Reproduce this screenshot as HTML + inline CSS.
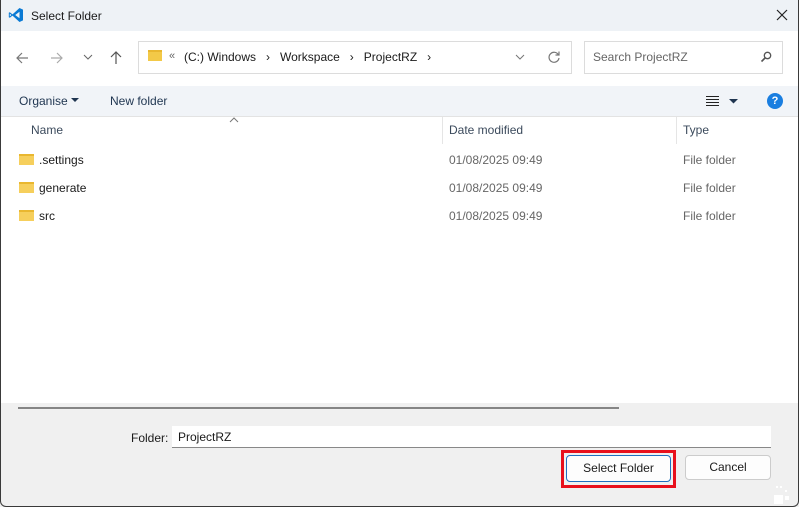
<!DOCTYPE html>
<html><head><style>
*{margin:0;padding:0;box-sizing:border-box}
body{width:799px;height:507px;overflow:hidden;font-family:"Liberation Sans",sans-serif;font-size:12px;color:#1a1a1a;background:#fff;position:relative}
.win{position:absolute;left:0;top:0;width:799px;height:507px;overflow:hidden}
.frame{position:absolute;left:0;top:0;width:799px;height:507px;border:1px solid #3a3a3a;border-top:none;border-radius:0 0 6px 6px;pointer-events:none}
.abs{position:absolute}
.title{left:0;top:0;width:799px;height:31px;background:#eef2f6}
.nav{left:0;top:31px;width:799px;height:55px;background:#fff}
.tool{left:0;top:86px;width:799px;height:30px;background:#f1f4f8}
.hdr{top:116px;height:27px;left:0;width:799px;background:#fff;border-top:1px solid #e3e3e3}
.bot{left:0;top:403px;width:799px;height:104px;background:#f0f0f0}
.row{position:absolute;left:0;width:799px;height:28px}
.row span{position:absolute;top:7px}
</style></head><body><div class="win">
<div class="abs title">
<svg class="abs" style="left:8px;top:7px" width="16" height="16" viewBox="0 0 16 16"><path d="M11.5 1 L15 2.6 V13.4 L11.5 15 L4.5 8.6 L1.8 10.7 L0.8 10.2 V5.8 L1.8 5.3 L4.5 7.4 Z M11.5 4.8 L7.2 8 L11.5 11.2 Z M1.8 6.6 V9.4 L3.4 8 Z" fill="#0a7ad4"/></svg>
<div class="abs" style="left:31px;top:9px;font-size:12px">Select Folder</div>
<svg class="abs" style="left:776px;top:9px" width="12" height="12"><path d="M1 1L11 11M11 1L1 11" stroke="#222" stroke-width="1.2"/></svg>
</div>
<div class="abs nav">
<svg class="abs" style="left:15px;top:20px" width="14" height="14"><path d="M13 7H2M7 2L2 7L7 12" stroke="#777" fill="none" stroke-width="1.2"/></svg>
<svg class="abs" style="left:50px;top:20px" width="14" height="14"><path d="M1 7H12M7 2L12 7L7 12" stroke="#aaa" fill="none" stroke-width="1.2"/></svg>
<svg class="abs" style="left:83px;top:22px" width="10" height="8"><path d="M1 2L5 6L9 2" stroke="#666" fill="none"/></svg>
<svg class="abs" style="left:109px;top:19px" width="14" height="15"><path d="M7 14V2M2 7L7 2L12 7" stroke="#555" fill="none" stroke-width="1.2"/></svg>
<div class="abs" style="left:138px;top:10px;width:434px;height:33px;border:1px solid #dcdcdc"></div>
<div class="abs" style="left:148px;top:19px;width:14px;height:11px;background:#f3c948;border-top:2px solid #e9b730"></div>
<div class="abs" style="left:169px;top:19px;font-size:11px;color:#666">«</div>
<div class="abs" style="left:184px;top:19px;font-size:12px">(C:) Windows&nbsp;&nbsp;&nbsp;›&nbsp;&nbsp;&nbsp;Workspace&nbsp;&nbsp;&nbsp;›&nbsp;&nbsp;&nbsp;ProjectRZ&nbsp;&nbsp;&nbsp;›</div>
<svg class="abs" style="left:515px;top:23px" width="10" height="7"><path d="M1 1L5 5L9 1" stroke="#777" fill="none"/></svg>
<svg class="abs" style="left:547px;top:19px" width="14" height="14"><path d="M11.5 5A5 5 0 1 0 12 8M12 1.5V5H8.5" stroke="#777" fill="none" stroke-width="1.2"/></svg>
<div class="abs" style="left:584px;top:10px;width:199px;height:33px;border:1px solid #dcdcdc"></div>
<div class="abs" style="left:593px;top:19px;color:#666">Search ProjectRZ</div>
<svg class="abs" style="left:760px;top:20px" width="12" height="12"><circle cx="7.5" cy="4.5" r="3.2" stroke="#555" fill="none" stroke-width="1.3"/><path d="M5 7L1.5 10.5" stroke="#555" stroke-width="1.6"/></svg>
</div>
<div class="abs tool">
<div class="abs" style="left:19px;top:8px;color:#1f3550">Organise</div>
<svg class="abs" style="left:71px;top:12px" width="8" height="5"><path d="M0 0H8L4 4Z" fill="#1f3550"/></svg>
<div class="abs" style="left:110px;top:8px;color:#1f3550">New folder</div>
<svg class="abs" style="left:706px;top:9px" width="13" height="12"><path d="M0 1.5H13M0 4.5H13M0 7.5H13M0 10.5H13" stroke="#222"/></svg>
<svg class="abs" style="left:729px;top:13px" width="9" height="5"><path d="M0 0H9L4.5 4.5Z" fill="#1f3550"/></svg>
<div class="abs" style="left:767px;top:7px;width:16px;height:16px;border-radius:50%;background:#1a7ee0;color:#fff;font-weight:bold;font-size:11px;text-align:center;line-height:16px">?</div>
</div>
<div class="abs hdr">
<div class="abs" style="left:31px;top:6px;color:#3b4a5c">Name</div>
<svg class="abs" style="left:229px;top:0px" width="10" height="6"><path d="M1 5L5 1L9 5" stroke="#777" fill="none"/></svg>
<div class="abs" style="left:442px;top:0;width:1px;height:27px;background:#e5e5e5"></div>
<div class="abs" style="left:449px;top:6px;color:#3b4a5c">Date modified</div>
<div class="abs" style="left:676px;top:0;width:1px;height:27px;background:#e5e5e5"></div>
<div class="abs" style="left:683px;top:6px;color:#3b4a5c">Type</div>
</div>
<div class="row" style="top:146px"><div class="abs" style="left:19px;top:8px;width:15px;height:11px;background:#f6cf5c;border-top:2px solid #e9b730"></div><span style="left:39px">.settings</span><span style="left:449px;color:#666">01/08/2025 09:49</span><span style="left:683px;color:#666">File folder</span></div>
<div class="row" style="top:174px"><div class="abs" style="left:19px;top:8px;width:15px;height:11px;background:#f6cf5c;border-top:2px solid #e9b730"></div><span style="left:39px">generate</span><span style="left:449px;color:#666">01/08/2025 09:49</span><span style="left:683px;color:#666">File folder</span></div>
<div class="row" style="top:202px"><div class="abs" style="left:19px;top:8px;width:15px;height:11px;background:#f6cf5c;border-top:2px solid #e9b730"></div><span style="left:39px">src</span><span style="left:449px;color:#666">01/08/2025 09:49</span><span style="left:683px;color:#666">File folder</span></div>
<div class="abs bot">
<div class="abs" style="left:18px;top:4px;width:601px;height:2px;background:#858585"></div>
<div class="abs" style="left:131px;top:28px">Folder:</div>
<div class="abs" style="left:172px;top:23px;width:599px;height:22px;background:#fff;border-bottom:1px solid #888"></div>
<div class="abs" style="left:178px;top:27px">ProjectRZ</div>
<div class="abs" style="left:561px;top:47px;width:115px;height:38px;border:3px solid #e8101c"></div>
<div class="abs" style="left:566px;top:52px;width:105px;height:27px;background:#fdfdfd;border:1px solid #1f6fbf;border-radius:4px;text-align:center;line-height:24px">Select Folder</div>
<div class="abs" style="left:685px;top:52px;width:86px;height:25px;background:#fdfdfd;border:1px solid #ccc;border-radius:4px;text-align:center;line-height:23px">Cancel</div>
<svg class="abs" style="left:772px;top:80px" width="20" height="22"><path d="M4 3h2v2H4zM8 3h2v2H8zM13 7h2v2h-2zM2 12h9v9H2zM13 13h4v4h-4z" fill="#fff"/></svg>
</div>
</div><div class="frame"></div></body></html>
